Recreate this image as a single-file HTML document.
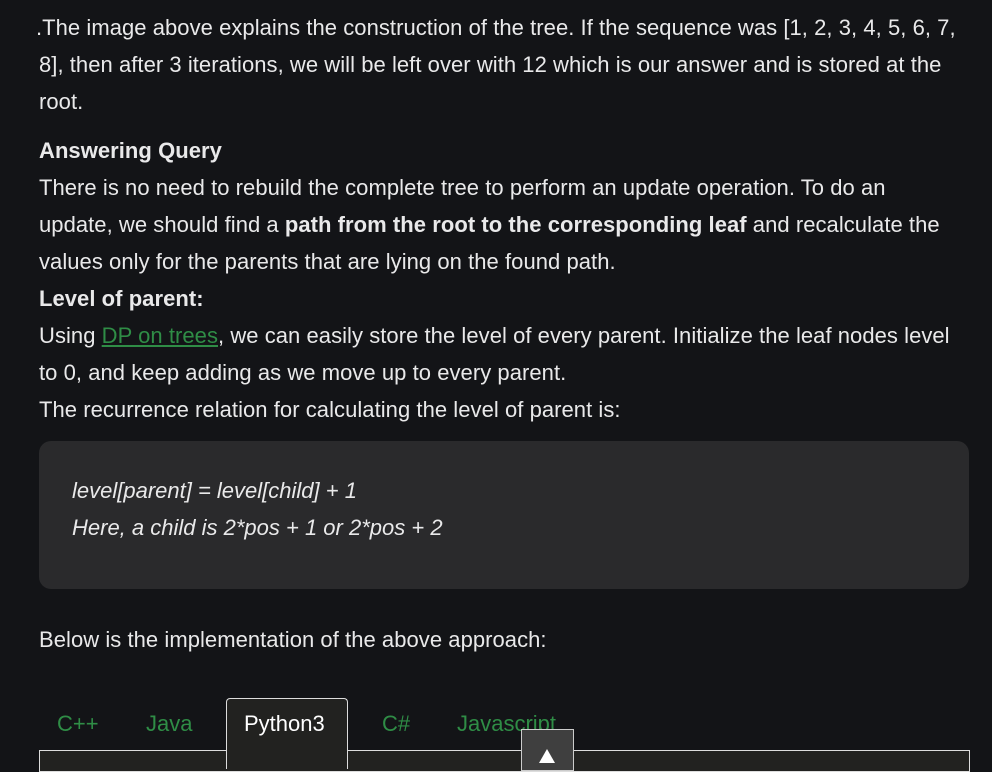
<!DOCTYPE html>
<html><head><meta charset="utf-8"><style>
body{margin:0;width:992px;height:761px;background:#131417;overflow:hidden;font-family:"Liberation Sans",sans-serif;color:#e9e9ea;position:relative}
.l{position:absolute;left:39px;font-size:22px;line-height:37px;height:37px;white-space:nowrap;letter-spacing:0.05px}
b{font-weight:bold}
a{color:#2f8d46;text-decoration:underline}
.box{position:absolute;left:39px;top:441px;width:930px;height:148px;background:#2a2a2c;border-radius:12px}
.c{position:absolute;left:72px;font-style:italic;font-size:22px;line-height:37px;white-space:nowrap}
.tab{position:absolute;top:711px;font-size:22px;color:#2f8d46}
</style></head><body>
<div class="l" style="top:9px;left:36px">.The image above explains the construction of the tree. If the sequence was [1, 2, 3, 4, 5, 6, 7,</div>
<div class="l" style="top:46px">8], then after 3 iterations, we will be left over with 12 which is our answer and is stored at the</div>
<div class="l" style="top:83px">root.</div>
<div class="l" style="top:132px"><b>Answering Query</b></div>
<div class="l" style="top:169px">There is no need to rebuild the complete tree to perform an update operation. To do an</div>
<div class="l" style="top:206px">update, we should find a <b>path from the root to the corresponding leaf</b> and recalculate the</div>
<div class="l" style="top:243px">values only for the parents that are lying on the found path.</div>
<div class="l" style="top:280px"><b>Level of parent:</b></div>
<div class="l" style="top:317px">Using <a>DP on trees</a>, we can easily store the level of every parent. Initialize the leaf nodes level</div>
<div class="l" style="top:354px">to 0, and keep adding as we move up to every parent.</div>
<div class="l" style="top:391px">The recurrence relation for calculating the level of parent is:</div>
<div class="box"></div>
<div class="c" style="top:472px">level[parent] = level[child] + 1</div>
<div class="c" style="top:509px">Here, a child is 2*pos + 1 or 2*pos + 2</div>
<div class="l" style="top:621px">Below is the implementation of the above approach:</div>
<div style="position:absolute;left:39px;top:750px;width:929px;height:20px;border:1px solid #ddd;background:#222220"></div>
<div style="position:absolute;left:226px;top:698px;width:120px;height:70px;border:1px solid #ddd;border-bottom:none;border-radius:4px 4px 0 0;background:#222220"></div>
<div class="tab" style="left:57px">C++</div>
<div class="tab" style="left:146px">Java</div>
<div class="tab" style="left:244px;color:#fff">Python3</div>
<div class="tab" style="left:382px">C#</div>
<div class="tab" style="left:457px">Javascript</div>
<div style="position:absolute;left:521px;top:729px;width:51px;height:40px;background:#3f3f3f;border:1px solid #ccc"></div>
<div style="position:absolute;left:539px;top:749px;width:0;height:0;border-left:8px solid transparent;border-right:8px solid transparent;border-bottom:14px solid #fff"></div>
</body></html>
